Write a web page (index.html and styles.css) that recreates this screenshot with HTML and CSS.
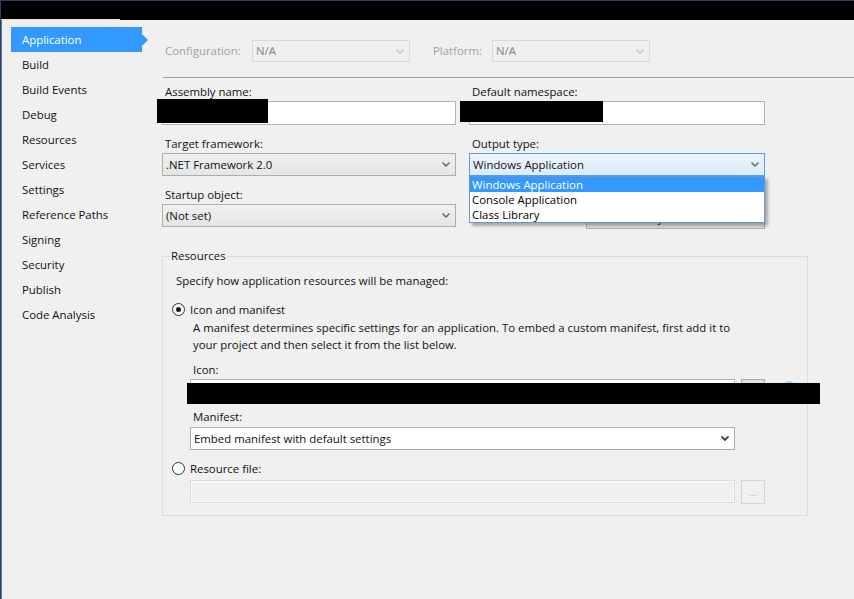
FILE: index.html
```html
<!DOCTYPE html>
<html>
<head>
<meta charset="utf-8">
<title>Application</title>
<link rel="stylesheet" href="styles.css">
</head>
<body>
<div class="window">
  <div class="titlebar"><span class="tb-left"></span><span class="tb-right"></span></div>
  <div class="main">
    <nav class="sidebar">
      <div class="nav-item active">Application</div>
      <div class="nav-item">Build</div>
      <div class="nav-item">Build Events</div>
      <div class="nav-item">Debug</div>
      <div class="nav-item">Resources</div>
      <div class="nav-item">Services</div>
      <div class="nav-item">Settings</div>
      <div class="nav-item">Reference Paths</div>
      <div class="nav-item">Signing</div>
      <div class="nav-item">Security</div>
      <div class="nav-item">Publish</div>
      <div class="nav-item">Code Analysis</div>
    </nav>
    <div class="content">
      <div class="config-row">
        <span class="cfg-lbl">Configuration:</span>
        <div class="select disabled w158"><span>N/A</span><svg class="chev" width="8" height="5" viewBox="0 0 8 5"><polyline points="0.5,0.5 4,4 7.5,0.5"/></svg></div>
        <span class="cfg-lbl platform-lbl">Platform:</span>
        <div class="select disabled w158"><span>N/A</span><svg class="chev" width="8" height="5" viewBox="0 0 8 5"><polyline points="0.5,0.5 4,4 7.5,0.5"/></svg></div>
      </div>
      <div class="sep"></div>
      <div class="fields">
        <div class="field">
          <span class="field-label">Assembly name:</span>
          <div class="textbox"></div>
        </div>
        <div class="field">
          <span class="field-label">Default namespace:</span>
          <div class="textbox"></div>
        </div>
        <div class="field">
          <span class="field-label">Target framework:</span>
          <div class="select"><span>.NET Framework 2.0</span><svg class="chev" width="8" height="5" viewBox="0 0 8 5"><polyline points="0.5,0.5 4,4 7.5,0.5"/></svg></div>
        </div>
        <div class="field">
          <span class="field-label">Output type:</span>
          <div class="select focus"><span>Windows Application</span><svg class="chev" width="8" height="5" viewBox="0 0 8 5"><polyline points="0.5,0.5 4,4 7.5,0.5"/></svg></div>
          <div class="dropdown">
            <div class="dd-item sel">Windows Application</div>
            <div class="dd-item">Console Application</div>
            <div class="dd-item">Class Library</div>
          </div>
        </div>
        <div class="field">
          <span class="field-label">Startup object:</span>
          <div class="select"><span>(Not set)</span><svg class="chev" width="8" height="5" viewBox="0 0 8 5"><polyline points="0.5,0.5 4,4 7.5,0.5"/></svg></div>
        </div>
        <div class="field btn-cell">
          <div class="button">Assembly Information...</div>
        </div>
      </div>
      <fieldset class="group">
        <legend>Resources</legend>
        <div class="group-intro">Specify how application resources will be managed:</div>
        <div class="radio-row"><span class="radio checked"></span><span>Icon and manifest</span></div>
        <div class="sub">
          <div class="desc">A manifest determines specific settings for an application. To embed a custom manifest, first add it to<br>your project and then select it from the list below.</div>
          <div class="sub-label">Icon:</div>
          <div class="input-row">
            <div class="textbox wide"></div>
            <div class="dots-btn">...</div>
            <span class="help-icon"></span>
          </div>
          <div class="sub-label manifest-lbl">Manifest:</div>
          <div class="select white wide manifest-sel"><span>Embed manifest with default settings</span><svg class="chev dark" width="8" height="5" viewBox="0 0 8 5"><polyline points="0.5,0.5 4,4 7.5,0.5"/></svg></div>
        </div>
        <div class="radio-row res-row"><span class="radio"></span><span>Resource file:</span></div>
        <div class="sub">
          <div class="input-row res-input">
            <div class="textbox wide disabled-box"></div>
            <div class="dots-btn disabled-btn">...</div>
          </div>
        </div>
      </fieldset>
    </div>
  </div>
  <div class="redact r1"></div>
  <div class="redact r2"></div>
  <div class="redact r3"></div>
</div>
</body>
</html>
```
FILE: styles.css
```css
* { box-sizing: border-box; }
html, body { margin: 0; padding: 0; }
body {
  background: #f0f0f0;
  font-family: "Open Sans", "Noto Sans", sans-serif;
  font-size: 11.4px;
  color: #111;
  width: 854px;
  height: 599px;
  overflow: hidden;
}
.window {
  position: relative;
  height: 599px;
  border-left: 1px solid #2f3f62;
  box-shadow: inset 1px 0 0 #5d74a3;
}
.titlebar {
  display: flex;
  height: 20px;
  border-top: 1px solid #2f3f62;
  background: #000;
}
.tb-left { width: 119px; border-bottom: 1px solid #e9e2a6; }
.tb-right { flex: 1; }

.main { display: flex; }
.sidebar { width: 149px; flex: none; padding: 7px 0 0 10px; }
.nav-item {
  position: relative;
  width: 131px;
  height: 25px;
  line-height: 25px;
  padding-left: 11px;
  color: #111;
  white-space: nowrap;
}
.nav-item.active { background: #3399ff; color: #fff; }
.nav-item.active::after {
  content: "";
  position: absolute;
  right: -6px;
  top: 7px;
  border-left: 6px solid #3399ff;
  border-top: 6px solid transparent;
  border-bottom: 6px solid transparent;
}

.content { flex: 1; padding: 20px 0 0 12px; }
.config-row { display: flex; align-items: center; height: 22px; line-height: 16px; }
.cfg-lbl { color: #a0a0a0; width: 90px; padding-left: 3px; white-space: nowrap; margin-top: -1px; }
.platform-lbl { margin-left: 23px; width: 59px; padding-left: 0; }

.select {
  display: flex;
  align-items: center;
  justify-content: space-between;
  height: 23px;
  border: 1px solid #acacac;
  background: linear-gradient(#f0f0f0, #e5e5e5);
  padding: 0 5px 0 3px;
  white-space: nowrap;
}
.select.disabled { height: 22px; border-color: #d9d9d9; background: #f0f0f0; color: #838383; }
.select.disabled span { margin-top: -1px; }
.select.focus { border-color: #569de5; background: linear-gradient(#ecf4fc, #dcecfc); }
.select.white { background: #fff; }
.w158 { width: 158px; }
.chev { fill: none; stroke: #606060; stroke-width: 1.4; flex: none; }
.disabled .chev { stroke: #c2c2c2; }
.chev.dark { stroke: #3c3c3c; stroke-width: 1.8; }

.sep { height: 1px; background: #a0a0a0; margin: 15px 0 0 1px; }

.fields {
  display: grid;
  grid-template-columns: 294px 296px;
  column-gap: 13px;
  row-gap: 11px;
  margin-top: 6px;
}
.field { position: relative; }
.field-label { display: block; height: 16px; line-height: 16px; padding-left: 3px; margin-bottom: 1px; }
.textbox { height: 24px; border: 1px solid #b4b4b4; background: #fff; }
.btn-cell { display: flex; justify-content: flex-end; padding-top: 18px; }
.button {
  width: 179px;
  height: 24px;
  border: 1px solid #adadad;
  background: #e1e1e1;
  display: flex;
  align-items: center;
  justify-content: center;
}
.dropdown {
  position: absolute;
  z-index: 2;
  top: 40px;
  left: 0;
  width: 296px;
  background: #fff;
  border: 1px solid #6e93c6;
  box-shadow: 3px 3px 3px rgba(0, 0, 0, 0.3);
}
.dd-item { height: 15px; line-height: 15px; padding-left: 2px; color: #000; white-space: nowrap; }
.dd-item.sel { background: #3399ff; color: #fff; }

.group {
  width: 646px;
  margin: 19px 0 0 0;
  padding: 0 0 11px 0;
  border: 1px solid #dcdcdc;
  min-inline-size: 0;
}
.group legend { margin-left: 7px; padding: 0 1px; line-height: 16px; }
.group-intro { margin: 9px 0 0 13px; line-height: 16px; }
.radio-row { display: flex; align-items: center; gap: 5px; height: 16px; margin: 12px 0 0 9px; }
.res-row { margin-top: 10px; }
.radio {
  width: 13px;
  height: 13px;
  border: 1px solid #333;
  border-radius: 50%;
  background: #fff;
  display: flex;
  align-items: center;
  justify-content: center;
}
.radio.checked::before {
  content: "";
  width: 5px;
  height: 5px;
  border-radius: 50%;
  background: #1a1a1a;
}
.sub { margin-left: 27px; }
.desc { line-height: 17px; margin: 2px 0 0 3px; white-space: nowrap; }
.sub-label { line-height: 16px; margin-top: 9px; padding-left: 3px; }
.manifest-lbl { margin-top: 6px; }
.manifest-sel { margin-top: 2px; }
.input-row { display: flex; align-items: flex-start; gap: 6px; margin-top: 1px; }
.res-input { margin-top: 4px; }
.wide { width: 545px; }
.dots-btn {
  width: 24px;
  height: 24px;
  border: 1px solid #adadad;
  background: #e1e1e1;
  display: flex;
  align-items: center;
  justify-content: center;
  font-size: 9px;
}
.disabled-box { height: 23px; border-color: #d9d9d9; background: #f0f0f0; box-shadow: inset 0 0 0 1px #fafafa; }
.disabled-btn { border-color: #d5d5d5; background: #f0f0f0; color: #b0b0b0; }
.help-icon {
  width: 12px;
  height: 12px;
  margin: 2px 0 0 12px;
  border-radius: 50%;
  background: #a9cff2;
}

.redact { position: absolute; background: #000; z-index: 3; }
.r1 { left: 156px; top: 99px; width: 111px; height: 24px; }
.r2 { left: 459px; top: 101px; width: 143px; height: 21px; }
.r3 { left: 186px; top: 383px; width: 633px; height: 21px; }
```
